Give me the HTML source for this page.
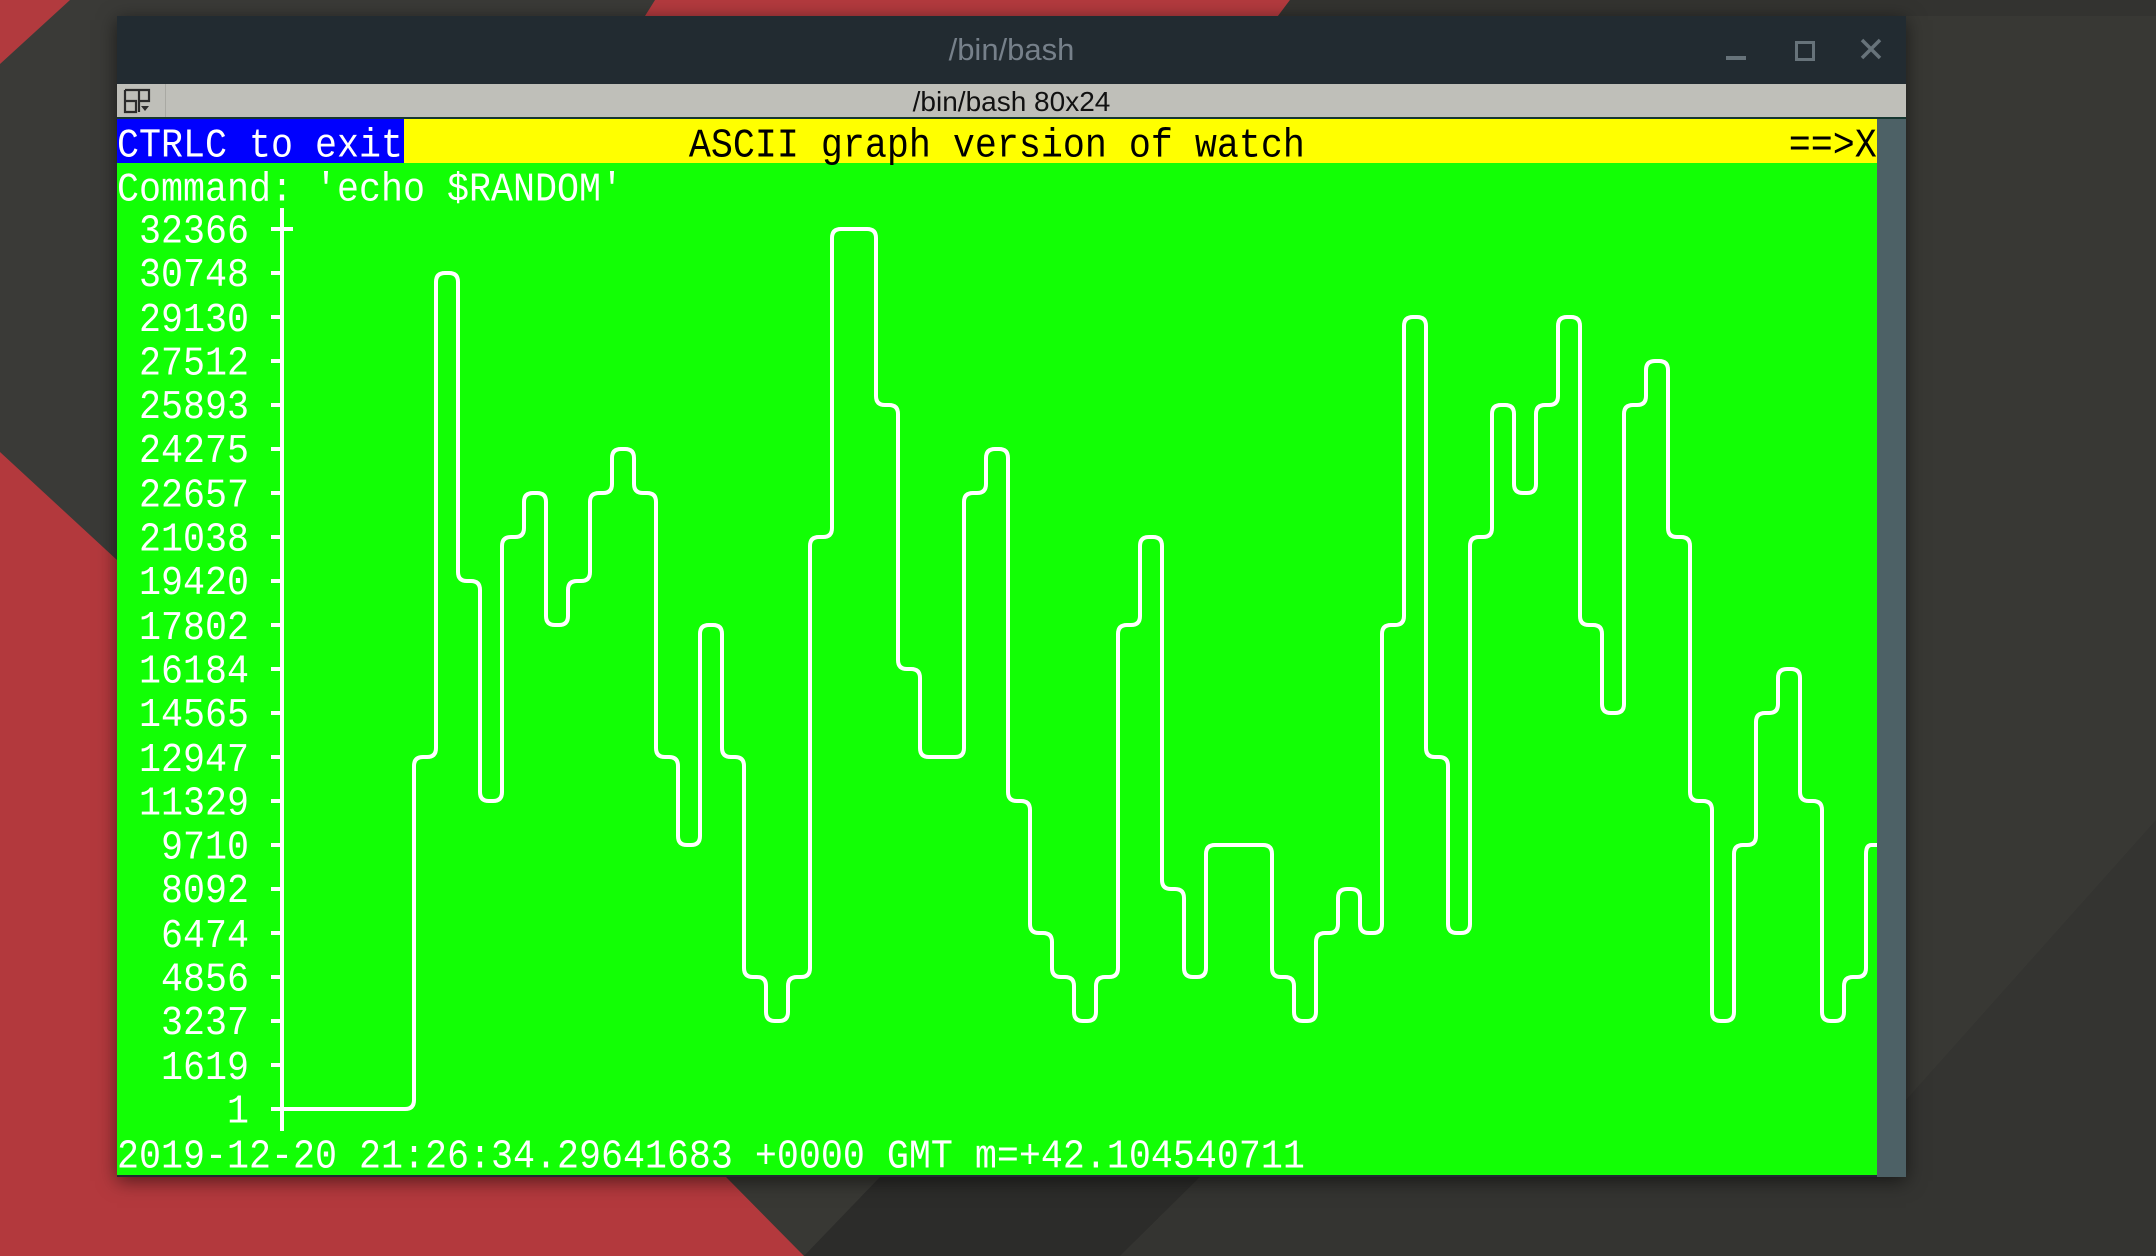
<!DOCTYPE html>
<html><head><meta charset="utf-8">
<style>
html,body{margin:0;padding:0;width:2156px;height:1256px;overflow:hidden;background:#30302d;}
.abs{position:absolute}
.row{position:absolute;left:117px;height:44px;line-height:44px;font-family:"Liberation Mono","DejaVu Sans Mono",monospace;font-size:36.67px;white-space:pre;color:#fff;transform:scaleY(1.12);transform-origin:0 0;}
</style></head><body>
<svg class="abs" style="left:0;top:0" width="2156" height="1256">
<rect width="2156" height="1256" fill="#383834"/>
<polygon points="0,60 70,0 660,0 117,560 0,452" fill="#3a3a37"/>
<polygon points="0,0 70,0 0,64" fill="#b23a3e"/>
<polygon points="0,452 117,560 117,1256 0,1256" fill="#b3393d"/>
<polygon points="117,560 804,1256 117,1256" fill="#b3393d"/>
<polygon points="655,0 1290,0 1278,16 645,16" fill="#b33a3e"/>
<polygon points="1290,0 2156,0 2156,16 1278,16" fill="#333330"/>
<polygon points="804,1256 880,1177 1200,1177 1120,1256" fill="#2c2c2a"/>
<polygon points="1200,1177 1906,1177 1906,1100 2156,820 2156,1256 1120,1256" fill="#343431"/>
</svg>
<div class="abs" style="left:117px;top:16px;width:1789px;height:1161px;box-shadow:0 4px 18px rgba(0,0,0,.55);background:#222b31"></div>
<div class="abs" style="left:117px;top:16px;width:1789px;height:68px;background:#222b31"></div>
<div class="abs" style="left:117px;top:32px;width:1789px;text-align:center;font-family:'Liberation Sans',sans-serif;font-size:31px;color:#76808a">/bin/bash</div>
<div class="abs" style="left:1726px;top:56px;width:20px;height:4px;background:#67737a"></div>
<div class="abs" style="left:1795px;top:41px;width:14px;height:14px;border:3px solid #67737a"></div>
<svg class="abs" style="left:1860px;top:38px" width="22" height="22"><path d="M2 2L20 20M20 2L2 20" stroke="#67737a" stroke-width="3.5"/></svg>
<div class="abs" style="left:117px;top:84px;width:1789px;height:34px;background:#bfbfb9"></div>
<div class="abs" style="left:165px;top:84px;width:1px;height:34px;background:#a9a9a3"></div>
<svg class="abs" style="left:122px;top:87px" width="30" height="28"><path d="M3 3H17V14H27V3H17M3 3V25H14V14H3M17 14V25" fill="none" stroke="#2b2b2b" stroke-width="2.2"/><path d="M19 19L27 19L23 24Z" fill="#2b2b2b"/></svg>
<div class="abs" style="left:117px;top:86px;width:1789px;text-align:center;font-family:'Liberation Sans',sans-serif;font-size:28px;color:#111">/bin/bash 80x24</div>
<div class="abs" style="left:117px;top:117px;width:1789px;height:2px;background:#163630"></div>
<div class="abs" style="left:1877px;top:119px;width:29px;height:1058px;background:#4d6166"></div>
<div class="abs" style="left:117px;top:119px;width:1760px;height:1056px;background:#12ff05"></div>
<div class="abs" style="left:117px;top:119px;width:1760px;height:44px;background:#ffff00"></div>
<div class="abs" style="left:117px;top:119px;width:287px;height:44px;background:#0000fe"></div>
<div class="row" style="top:122px">CTRLC to exit</div>
<div class="row" style="top:122px;color:#000">                          ASCII graph version of watch                      ==&gt;X</div>
<div class="row" style="top:166px">Command: 'echo $RANDOM'</div>
<div class="row" style="top:211px;line-height:39.3px"> 32366
 30748
 29130
 27512
 25893
 24275
 22657
 21038
 19420
 17802
 16184
 14565
 12947
 11329
  9710
  8092
  6474
  4856
  3237
  1619
     1</div>
<div class="row" style="top:1133px">2019-12-20 21:26:34.29641683 +0000 GMT m=+42.104540711</div>
<svg class="abs" style="left:0;top:0" width="2156" height="1256">
<g stroke="#fff" stroke-width="4" fill="none">
<path d="M282 208V1131"/>
<path d="M282 229H293"/>
<path d="M271 229H282M271 273H282M271 317H282M271 361H282M271 405H282M271 449H282M271 493H282M271 537H282M271 581H282M271 625H282M271 669H282M271 713H282M271 757H282M271 801H282M271 845H282M271 889H282M271 933H282M271 977H282M271 1021H282M271 1065H282M271 1109H282"/>
<path id="curve" stroke-linejoin="round"/>
</g>
</svg>
<script>
(function(){
var t=[[13,14],[14,3],[15,10],[16,15],[17,9],[18,8],[19,11],[20,10],[21,8],[22,7],[23,8],[24,14],[25,16],[26,11],[27,14],[28,19],[29,20],[30,19],[31,9],[32,2],[34,6],[35,12],[36,14],[38,8],[39,7],[40,15],[41,18],[42,19],[43,20],[44,19],[45,11],[46,9],[47,17],[48,19],[49,16],[52,19],[53,20],[54,18],[55,17],[56,18],[57,11],[58,4],[59,14],[60,18],[61,9],[62,6],[63,8],[64,6],[65,4],[66,11],[67,13],[68,6],[69,5],[70,9],[71,15],[72,20],[73,16],[74,13],[75,12],[76,15],[77,20],[78,19],[79,16]];
function X(c){return 128+22*c}function Y(r){return 141+44*r}
var pts=[[282,Y(22)]],pr=22;
t.forEach(function(a){pts.push([X(a[0]),Y(pr)]);pts.push([X(a[0]),Y(a[1])]);pr=a[1];});
pts.push([1877,Y(pr)]);
function mv(f,to,r){var dx=to[0]-f[0],dy=to[1]-f[1],L=Math.hypot(dx,dy)||1;var rr=Math.min(r,L/2);return [f[0]+dx/L*rr,f[1]+dy/L*rr];}
var R=9,d="M"+pts[0][0]+" "+pts[0][1];
for(var i=1;i<pts.length-1;i++){
var p=pts[i],a=pts[i-1],b=pts[i+1];
var p1=mv(p,a,R),p2=mv(p,b,R);
d+=" L"+p1[0]+" "+p1[1]+" Q"+p[0]+" "+p[1]+" "+p2[0]+" "+p2[1];
}
var l=pts[pts.length-1];d+=" L"+l[0]+" "+l[1];
document.getElementById("curve").setAttribute("d",d);
})();
</script>
</body></html>
